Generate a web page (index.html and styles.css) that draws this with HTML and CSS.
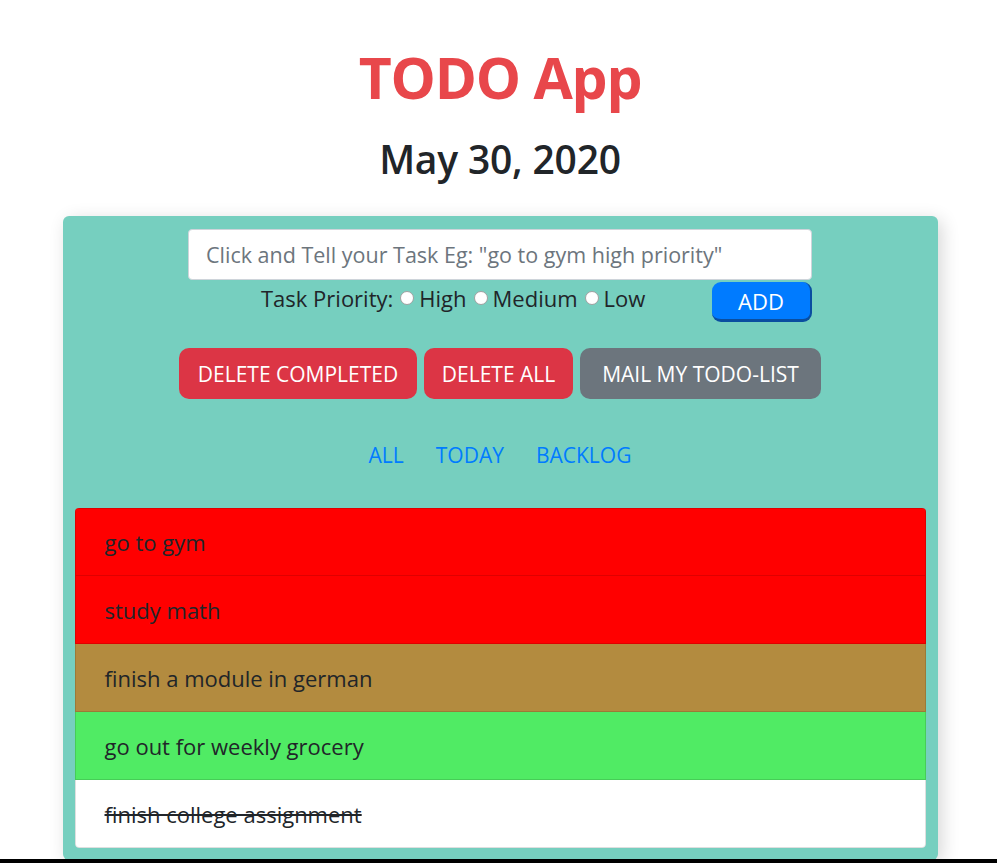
FILE: index.html
```html
<!DOCTYPE html>
<html lang="en">
<head>
<meta charset="utf-8">
<title>TODO App</title>
<link rel="stylesheet" href="styles.css">
</head>
<body>
<header class="head">
  <h1 class="title">TODO App</h1>
  <h2 class="date">May 30, 2020</h2>
</header>
<main class="card">
  <div class="entry">
    <input class="task-input" type="text" placeholder="Click and Tell your Task Eg: &quot;go to gym high priority&quot;">
    <div class="priority-row">
      <div class="priority">
        <span>Task Priority:</span>
        <label class="opt"><span class="radio"></span>High</label>
        <label class="opt"><span class="radio"></span>Medium</label>
        <label class="opt"><span class="radio"></span>Low</label>
      </div>
      <button class="btn-add">ADD</button>
    </div>
  </div>
  <div class="actions">
    <button class="btn btn-red btn-dc">DELETE COMPLETED</button>
    <button class="btn btn-red btn-da">DELETE ALL</button>
    <button class="btn btn-gray btn-mail">MAIL MY TODO-LIST</button>
  </div>
  <nav class="tabs">
    <a class="tab">ALL</a>
    <a class="tab">TODAY</a>
    <a class="tab">BACKLOG</a>
  </nav>
  <ul class="list">
    <li class="item high">go to gym</li>
    <li class="item high">study math</li>
    <li class="item medium">finish a module in german</li>
    <li class="item low">go out for weekly grocery</li>
    <li class="item done">finish college assignment</li>
  </ul>
</main>
<div class="screen-edge"></div>
</body>
</html>
```

FILE: styles.css
```css
* { box-sizing: border-box; }
html, body { margin: 0; padding: 0; }
body {
  font-family: "Open Sans", "Noto Sans", sans-serif;
  color: #212529;
  background: #fff;
  padding-left: 3px;
}
.head { text-align: center; }
.title {
  margin: 0;
  padding-top: 38px;
  font-size: 57px;
  line-height: 78px;
  font-weight: 700;
  color: #e8474b;
  letter-spacing: -1.2px;
}
.date {
  margin: 0;
  padding-top: 15px;
  font-size: 39px;
  line-height: 56px;
  font-weight: 600;
  color: #212529;
  letter-spacing: -0.2px;
}
.card {
  width: 875px;
  margin: 29px auto 0;
  background: #76cfbf;
  border-radius: 6px;
  padding: 13px 12px 12px;
  box-shadow: 4px 4px 18px rgba(0,0,0,0.16);
}
.entry {
  width: 624px;
  margin: 0 auto;
}
.task-input {
  display: block;
  width: 624px;
  height: 51px;
  border: 1px solid #ced4da;
  border-radius: 4px;
  padding: 0 17px;
  font-family: inherit;
  font-size: 21.5px;
  color: #495057;
  background: #fff;
  outline: none;
}
.task-input::placeholder { color: #6c757d; }
.priority-row {
  display: flex;
  justify-content: space-between;
  align-items: flex-start;
  padding-left: 73px;
  margin-top: 2px;
}
.priority {
  display: flex;
  align-items: center;
  gap: 7px;
  font-size: 22px;
  line-height: 32px;
  margin-top: 0;
}
.opt { display: flex; align-items: center; gap: 5px; }
.radio {
  flex: 0 0 14px;
  width: 14px;
  height: 14px;
  border-radius: 50%;
  border: 1px solid #a0a0a0;
  background: #fff;
  display: block;
}
.btn-add {
  width: 100px;
  height: 40px;
  margin-top: 0;
  background: #007bff;
  color: #fff;
  border: none;
  border-right: 2px solid #0a4ea0;
  border-bottom: 3px solid #0a4ea0;
  border-radius: 9px;
  font-family: inherit;
  font-size: 22px;
  padding: 0;
}
.actions {
  display: flex;
  justify-content: center;
  gap: 7px;
  margin-top: 26px;
}
.btn {
  height: 51px;
  border: none;
  border-radius: 10px;
  color: #fff;
  font-family: inherit;
  font-size: 21px;
  padding: 0;
}
.btn-red { background: #dc3545; }
.btn-gray { background: #6c757d; }
.btn-dc { width: 238px; }
.btn-da { width: 149px; }
.btn-mail { width: 241px; }
.tabs {
  display: flex;
  justify-content: center;
  gap: 32px;
  margin-top: 40px;
  font-size: 21px;
  line-height: 32px;
}
.tab { color: #007bff; }
.list {
  list-style: none;
  margin: 37px 0 0;
  padding: 0;
  border-radius: 4px;
  overflow: hidden;
}
.item {
  height: 68px;
  display: flex;
  align-items: center;
  padding-left: 29px;
  font-size: 22px;
  color: #212529;
  border: 1px solid rgba(0,0,0,0.125);
  border-top-width: 0;
}
.item:first-child { border-top-width: 1px; }
.high { background: #ff0000; }
.medium { background: #b38b3f; }
.low { background: #50eb64; }
.done { background: #fff; text-decoration: line-through; border-radius: 0 0 4px 4px; }
.screen-edge {
  position: fixed;
  left: 0;
  right: 0;
  bottom: 0;
  height: 4px;
  background: #000;
}
```
